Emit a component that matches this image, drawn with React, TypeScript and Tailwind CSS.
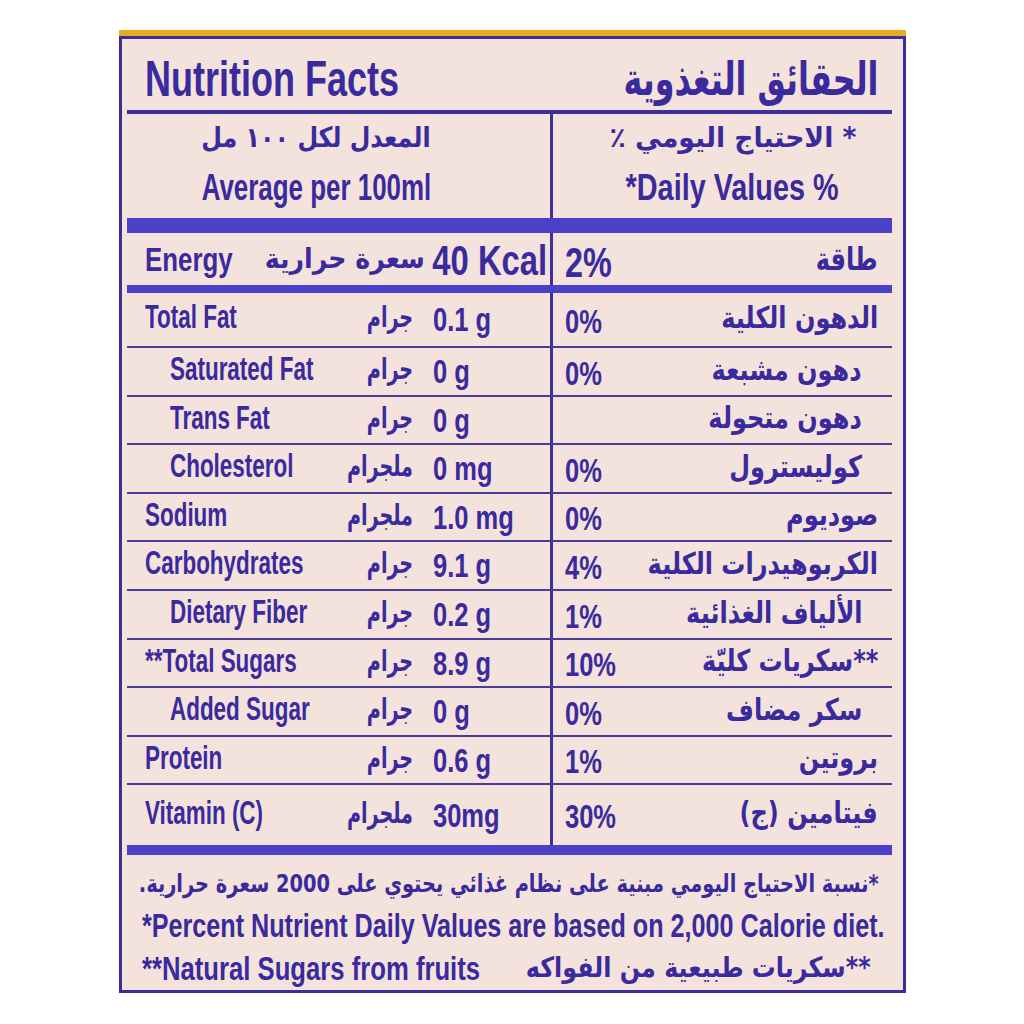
import React from "react";

type Row = {
  en: string;
  sub?: boolean;
  unit: string;
  value: string;
  pct: string;
  ar: string;
  h: string;
};

const rows: Row[] = [
  { en: "Total Fat", unit: "جرام", value: "0.1 g", pct: "0%", ar: "الدهون الكلية", h: "h-[55px]" },
  { en: "Saturated Fat", sub: true, unit: "جرام", value: "0 g", pct: "0%", ar: "دهون مشبعة", h: "h-[49px]" },
  { en: "Trans Fat", sub: true, unit: "جرام", value: "0 g", pct: "", ar: "دهون متحولة", h: "h-[48px]" },
  { en: "Cholesterol", sub: true, unit: "ملجرام", value: "0 mg", pct: "0%", ar: "كوليسترول", h: "h-[49px]" },
  { en: "Sodium", unit: "ملجرام", value: "1.0 mg", pct: "0%", ar: "صوديوم", h: "h-[48px]" },
  { en: "Carbohydrates", unit: "جرام", value: "9.1 g", pct: "4%", ar: "الكربوهيدرات الكلية", h: "h-[49px]" },
  { en: "Dietary Fiber", sub: true, unit: "جرام", value: "0.2 g", pct: "1%", ar: "الألياف الغذائية", h: "h-[49px]" },
  { en: "**Total Sugars", unit: "جرام", value: "8.9 g", pct: "10%", ar: "**سكريات كليّة", h: "h-[48px]" },
  { en: "Added Sugar", sub: true, unit: "جرام", value: "0 g", pct: "0%", ar: "سكر مضاف", h: "h-[49px]" },
  { en: "Protein", unit: "جرام", value: "0.6 g", pct: "1%", ar: "بروتين", h: "h-[48px]" },
];

const font = "font-['Liberation_Sans','DejaVu_Sans',sans-serif] font-bold whitespace-nowrap";
const arFont = "font-['DejaVu_Sans','Liberation_Sans',sans-serif] font-bold whitespace-nowrap";

const NutrientRow = ({ row, last }: { row: Row; last?: boolean }) => (
  <div className={`flex ${row.h} ${last ? "" : "border-b-2 border-[#4a3c96]"}`}>
    <div className="flex w-[423px] shrink-0 items-center pl-[18px] pb-[6px]">
      <div className={`w-[178px] shrink-0 ${row.sub ? "pl-[25px]" : ""}`}>
        <span className={`inline-block origin-left scale-x-[0.66] text-[34px] leading-none ${font}`}>{row.en}</span>
      </div>
      <div className="flex w-[90px] shrink-0 justify-end pt-[2px]">
        <span dir="rtl" className={`inline-block origin-right scale-x-[0.66] text-[29px] leading-none ${arFont}`}>
          {row.unit}
        </span>
      </div>
      <div className="ml-[20px] pt-[6px]">
        <span className={`inline-block origin-left scale-x-[0.75] text-[34px] leading-none ${font}`}>{row.value}</span>
      </div>
    </div>
    <div className="w-[3px] shrink-0 bg-[#3e2f9e]" />
    <div className="flex min-w-0 flex-1 items-center pl-[12px] pr-[14px] pb-[4px]">
      <span className={`inline-block w-[60px] shrink-0 origin-left scale-x-[0.75] pt-[6px] text-[34px] leading-none ${font}`}>
        {row.pct}
      </span>
      <div className={`flex min-w-0 flex-1 justify-end ${row.sub ? "pr-[16px]" : ""}`}>
        <span dir="rtl" className={`inline-block origin-right scale-x-[0.8] text-[30px] leading-none ${arFont}`}>
          {row.ar}
        </span>
      </div>
    </div>
  </div>
);

export default function App() {
  return (
    <div className="min-h-screen bg-white text-[#3a2a9e]">
      <div className="ml-[119px] w-[787px] pt-[30px]">
        <div className="h-[6px] bg-[#e6ad22]" />
        <div className="flex h-[957px] flex-col overflow-hidden border-[3px] border-[#3c2e96] bg-[#f3e3dc]">
          {/* title */}
          <div className="flex h-[71px] items-center justify-between pl-[23px] pr-[25px] pt-[8px]">
            <span className={`inline-block origin-left scale-x-[0.72] text-[50px] leading-none ${font}`}>Nutrition Facts</span>
            <span dir="rtl" className={`inline-block origin-right scale-x-[0.69] text-[46px] leading-none ${arFont}`}>
              الحقائق التغذوية
            </span>
          </div>
          <div className="ml-[5px] mr-[11px] flex flex-col">
            <div className="h-[4px] bg-[#3e2f9e]" />
            {/* header */}
            <div className="flex h-[104px]">
              <div className="flex w-[423px] shrink-0 flex-col items-center gap-[18px] pr-[45px] pt-[10px]">
                <span dir="rtl" className={`inline-block scale-x-[0.85] text-[28px] leading-none ${arFont}`}>
                  المعدل لكل ١٠٠ مل
                </span>
                <span className={`inline-block scale-x-[0.72] text-[36px] leading-none ${font}`}>Average per 100ml</span>
              </div>
              <div className="w-[3px] shrink-0 bg-[#3e2f9e]" />
              <div className="flex min-w-0 flex-1 flex-col items-center gap-[18px] pl-[20px] pt-[10px]">
                <span dir="rtl" className={`inline-block scale-x-[0.95] text-[28px] leading-none ${arFont}`}>
                  * الاحتياج اليومي ٪
                </span>
                <span className={`inline-block scale-x-[0.8] text-[36px] leading-none ${font}`}>*Daily Values %</span>
              </div>
            </div>
            <div className="h-[15px] bg-[#4b41c9]" />
            {/* energy */}
            <div className="flex h-[52px]">
              <div className="flex w-[423px] shrink-0 items-center pl-[18px] pr-[3px]">
                <span className={`inline-block w-[88px] shrink-0 origin-left scale-x-[0.76] text-[34px] leading-none ${font}`}>
                  Energy
                </span>
                <div className="ml-auto flex items-center">
                  <span dir="rtl" className={`inline-block origin-right scale-x-[0.9] text-[28px] leading-none ${arFont}`}>
                    سعرة حرارية
                  </span>
                  <span className={`-ml-[25px] inline-block origin-right scale-x-[0.78] pt-[4px] text-[42px] leading-none ${font}`}>
                    40 Kcal
                  </span>
                </div>
              </div>
              <div className="w-[3px] shrink-0 bg-[#3e2f9e]" />
              <div className="flex min-w-0 flex-1 items-center justify-between pl-[12px] pr-[14px]">
                <span className={`inline-block origin-left scale-x-[0.77] pt-[8px] text-[42px] leading-none ${font}`}>2%</span>
                <span dir="rtl" className={`inline-block origin-right scale-x-[0.75] text-[32px] leading-none ${arFont}`}>
                  طاقة
                </span>
              </div>
            </div>
            <div className="h-[8px] bg-[#4b41c9]" />
            {rows.map((row) => (
              <NutrientRow key={row.en} row={row} />
            ))}
            <NutrientRow
              last
              row={{ en: "Vitamin (C)", unit: "ملجرام", value: "30mg", pct: "30%", ar: "فيتامين (ج)", h: "h-[60px]" }}
            />
            <div className="h-[10px] bg-[#4b41c9]" />
          </div>
          {/* footnotes */}
          <div className="flex flex-col pl-[20px] pr-[24px] pt-[8px]">
            <div className="flex h-[40px] min-w-0 items-center justify-end">
              <span dir="rtl" className={`inline-block origin-right scale-x-[0.775] text-[25px] leading-none ${arFont}`}>
                *نسبة الاحتياج اليومي مبنية على نظام غذائي يحتوي على 2000 سعرة حرارية.
              </span>
            </div>
            <div className="flex h-[44px] items-center">
              <span className={`inline-block origin-left scale-x-[0.74] text-[34px] leading-none ${font}`}>
                *Percent Nutrient Daily Values are based on 2,000 Calorie diet.
              </span>
            </div>
            <div className="flex h-[42px] items-center">
              <span className={`inline-block w-[340px] shrink-0 origin-left scale-x-[0.755] text-[34px] leading-none ${font}`}>
                **Natural Sugars from fruits
              </span>
              <div className="flex min-w-0 flex-1 justify-end pr-[8px]">
                <span dir="rtl" className={`inline-block origin-right scale-x-[0.85] text-[28px] leading-none ${arFont}`}>
                  **سكريات طبيعية من الفواكه
                </span>
              </div>
            </div>
          </div>
        </div>
      </div>
    </div>
  );
}
